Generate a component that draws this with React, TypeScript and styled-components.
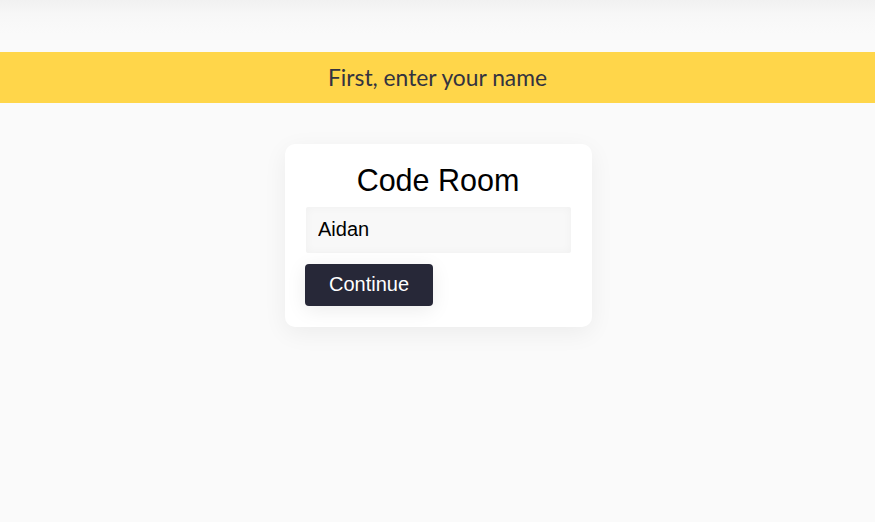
import React from "react";
import styled, { createGlobalStyle } from "styled-components";

const Global = createGlobalStyle`
  html, body { margin: 0; padding: 0; background: #fafafa; }
  body { font-family: Arial, "Liberation Sans", sans-serif; }
`;

const Page = styled.div`
  min-height: 522px;
  background: #fafafa;
  display: flex;
  flex-direction: column;
`;

const TopBar = styled.div`
  height: 52px;
  background: linear-gradient(to bottom, #f1f1f1 0px, #f7f7f7 14px, #fafafa 34px);
`;

const Banner = styled.div`
  height: 51px;
  box-sizing: border-box;
  padding-bottom: 2px;
  background: #ffd64a;
  display: flex;
  align-items: center;
  justify-content: center;
  color: #333340;
  font-family: Lato, "Open Sans", sans-serif;
  font-size: 22.8px;
`;

const Main = styled.main`
  display: flex;
  justify-content: center;
  padding: 41px 0 0 2px;
`;

const Card = styled.form`
  width: 307px;
  box-sizing: border-box;
  background: #ffffff;
  border-radius: 10px;
  box-shadow: 0 6px 24px rgba(0, 0, 0, 0.06);
  padding: 16px 21px 21px 20px;
  display: flex;
  flex-direction: column;
  align-items: flex-start;
`;

const Title = styled.h1`
  align-self: stretch;
  margin: 0 0 7px;
  text-align: center;
  font-family: Arial, "Liberation Sans", sans-serif;
  font-weight: 400;
  font-size: 30.5px;
  line-height: 40px;
  color: #000;
`;

const NameInput = styled.input`
  align-self: stretch;
  margin-left: 1px;
  box-sizing: border-box;
  height: 46px;
  border: none;
  outline: none;
  border-radius: 2px;
  background: #f8f8f8;
  box-shadow: inset 0 0 10px rgba(0, 0, 0, 0.035);
  padding: 0 12px 2px;
  font-family: Arial, "Liberation Sans", sans-serif;
  font-size: 20px;
  color: #000;
`;

const Button = styled.button`
  margin-top: 11px;
  width: 128px;
  height: 42px;
  border: none;
  border-radius: 4px;
  background: #272838;
  color: #fff;
  padding: 0 0 2px;
  font-family: Arial, "Liberation Sans", sans-serif;
  font-size: 20px;
  box-shadow: 0 4px 20px rgba(0, 0, 0, 0.08);
  cursor: pointer;
`;

export default function App() {
  return (
    <>
      <Global />
      <Page>
        <TopBar />
        <Banner>First, enter your name</Banner>
        <Main>
          <Card onSubmit={(e) => e.preventDefault()}>
            <Title>Code Room</Title>
            <NameInput defaultValue="Aidan" />
            <Button type="submit">Continue</Button>
          </Card>
        </Main>
      </Page>
    </>
  );
}
